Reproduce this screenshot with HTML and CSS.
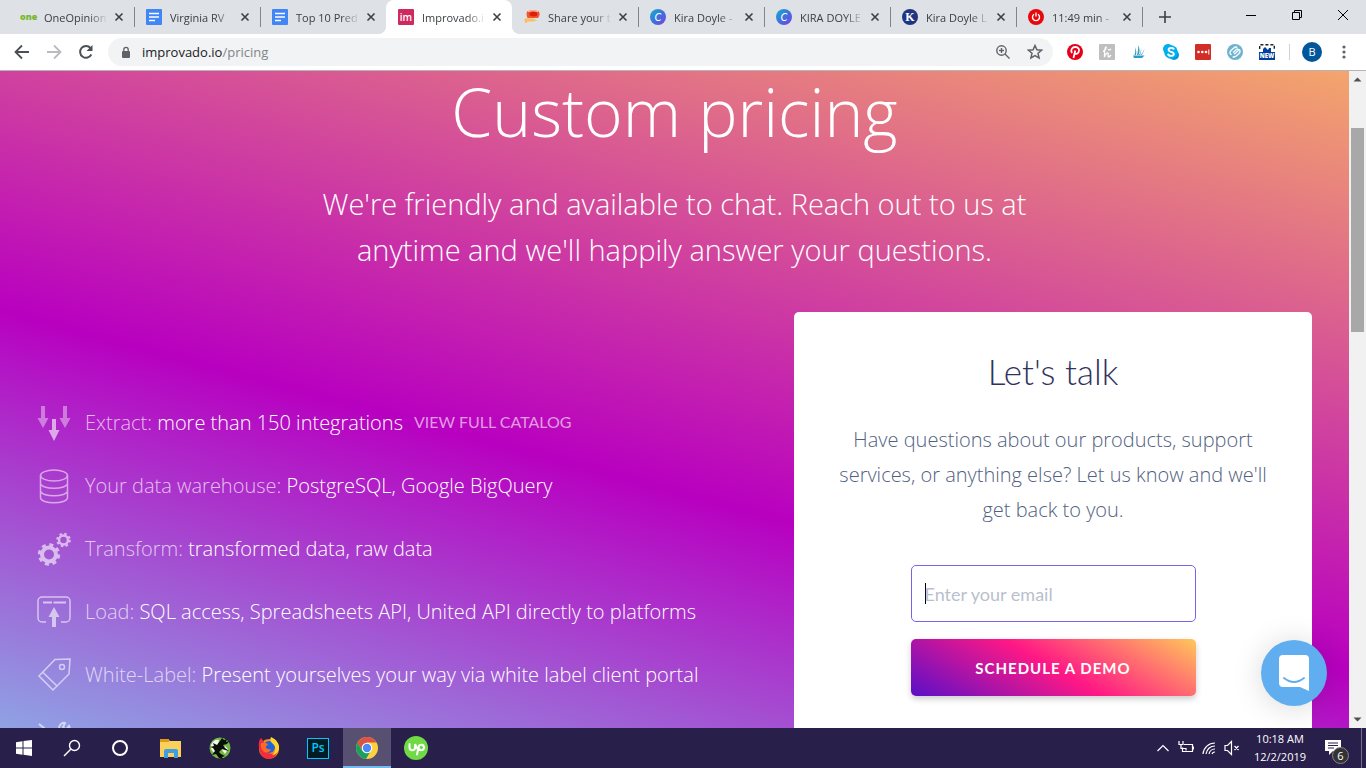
FILE: index.html
```
<!DOCTYPE html>
<html lang="en">
<head>
    <meta charset="UTF-8">
    <meta name="viewport" content="width=device-width, initial-scale=1.0">
    <title>Improvado.io - Pricing</title>
    <link rel="stylesheet" href="styles.css">
</head>
<body>
    <!-- tab strip -->
    <div class="tabs">
        <div class="tab">
            <span class="fav fav-one">one</span>
            <span class="tab-title">OneOpinion</span>
            <button class="close" aria-label="Close tab"><svg viewBox="0 0 12 12"><path d="M2.5 2.5l7 7M9.5 2.5l-7 7"/></svg></button>
        </div>
        <div class="tab">
            <svg class="fav" viewBox="0 0 16 16"><rect width="16" height="16" rx="1" fill="#4285f4"/><path d="M3 4.5h10M3 8h10M3 11.500h6" stroke="#fff" stroke-width="1.500"/></svg>
            <span class="tab-title">Virginia RV</span>
            <button class="close" aria-label="Close tab"><svg viewBox="0 0 12 12"><path d="M2.5 2.5l7 7M9.5 2.5l-7 7"/></svg></button>
        </div>
        <div class="tab no-line">
            <svg class="fav" viewBox="0 0 16 16"><rect width="16" height="16" rx="1" fill="#4285f4"/><path d="M3 4.5h10M3 8h10M3 11.500h6" stroke="#fff" stroke-width="1.500"/></svg>
            <span class="tab-title">Top 10 Pred</span>
            <button class="close" aria-label="Close tab"><svg viewBox="0 0 12 12"><path d="M2.5 2.5l7 7M9.5 2.5l-7 7"/></svg></button>
        </div>
        <div class="tab active no-line">
            <span class="fav fav-im">im</span>
            <span class="tab-title">Improvado.i</span>
            <button class="close" aria-label="Close tab"><svg viewBox="0 0 12 12"><path d="M2.5 2.5l7 7M9.5 2.5l-7 7"/></svg></button>
        </div>
        <div class="tab">
            <svg class="fav" viewBox="0 0 16 16"><path d="M1 9.500h8l4 2-4 1H3V14H1v-2l-1-1z" fill="#fdbd63"/><path d="M3 2.500Q9 0 15 2.500q1.500 4-1 6.500H3.500Q2 6 3 2.500z" fill="#f0582c"/><ellipse cx="9.500" cy="5" rx="4" ry="2.500" fill="#dc2010"/><path d="M4 2.500Q9 1 14 2.500" stroke="#ffc09a" fill="none"/></svg>
            <span class="tab-title">Share your t</span>
            <button class="close" aria-label="Close tab"><svg viewBox="0 0 12 12"><path d="M2.5 2.5l7 7M9.5 2.5l-7 7"/></svg></button>
        </div>
        <div class="tab">
            <span class="fav fav-canva">C</span>
            <span class="tab-title">Kira Doyle -</span>
            <button class="close" aria-label="Close tab"><svg viewBox="0 0 12 12"><path d="M2.5 2.5l7 7M9.5 2.5l-7 7"/></svg></button>
        </div>
        <div class="tab">
            <span class="fav fav-canva">C</span>
            <span class="tab-title">KIRA DOYLE</span>
            <button class="close" aria-label="Close tab"><svg viewBox="0 0 12 12"><path d="M2.5 2.5l7 7M9.5 2.5l-7 7"/></svg></button>
        </div>
        <div class="tab">
            <span class="fav fav-k">K</span>
            <span class="tab-title">Kira Doyle L</span>
            <button class="close" aria-label="Close tab"><svg viewBox="0 0 12 12"><path d="M2.5 2.5l7 7M9.5 2.5l-7 7"/></svg></button>
        </div>
        <div class="tab">
            <svg class="fav" viewBox="0 0 16 16"><circle cx="8" cy="8" r="8" fill="#e8080c"/><path d="M6 5.300a3.500 3.500 0 1 0 4 0M8 3.500v4" fill="none" stroke="#fff" stroke-width="1.400"/></svg>
            <span class="tab-title">11:49 min -</span>
            <button class="close" aria-label="Close tab"><svg viewBox="0 0 12 12"><path d="M2.5 2.5l7 7M9.5 2.5l-7 7"/></svg></button>
        </div>
        <button class="new-tab" aria-label="New tab"><svg viewBox="0 0 12 12"><path d="M6 0v12M0 6h12"/></svg></button>
        <div class="win-controls">
            <button aria-label="Minimize"><svg viewBox="0 0 10 10"><path d="M0 5.500h10"/></svg></button>
            <button aria-label="Restore"><svg viewBox="0 0 10 10"><path d="M.5 2.500h7v7h-7zM2.500 2.500v-2h7v7h-2"/></svg></button>
            <button aria-label="Close"><svg viewBox="0 0 10 10"><path d="M0 0l10 10M10 0L0 10"/></svg></button>
        </div>
    </div>

    <!-- toolbar -->
    <div class="toolbar">
        <button class="tool" aria-label="Back"><svg viewBox="0 0 16 16"><path d="M15 8H2M8 1.500L1.500 8 8 14.500" fill="none" stroke="#4c5054" stroke-width="1.800"/></svg></button>
        <button class="tool" aria-label="Forward"><svg viewBox="0 0 16 16"><path d="M1 8h13M8 1.500L14.500 8 8 14.500" fill="none" stroke="#b9bbbe" stroke-width="1.800"/></svg></button>
        <button class="tool" aria-label="Reload"><svg viewBox="0 0 16 16"><path d="M13.300 10.500A5.900 5.900 0 1 1 12.500 4" fill="none" stroke="#4c5054" stroke-width="2"/><path d="M14.500 1v6h-6z" fill="#4c5054"/></svg></button>
        <div class="omnibox">
            <svg class="lock" viewBox="0 0 10 13"><rect x="1" y="5" width="8" height="7" rx="1" fill="#5f6368"/><path d="M2.800 5V3.500a2.200 2.200 0 0 1 4.400 0V5" fill="none" stroke="#5f6368" stroke-width="1.300"/></svg>
            <a class="url" href="#">improvado.io<span>/pricing</span></a>
            <button class="tool" aria-label="Zoom"><svg viewBox="0 0 16 16" fill="none" stroke="#5f6368" stroke-width="1.400"><circle cx="6.500" cy="6.500" r="4.700"/><path d="M10 10l4.500 4.500M4 6.500h5M6.500 4v5"/></svg></button>
            <button class="tool" aria-label="Bookmark"><svg viewBox="0 0 16 16"><path d="M8 1.500l1.900 4.300 4.700.4-3.600 3.100 1.100 4.600L8 11.500l-4.100 2.400L5 9.300 1.400 6.200l4.700-.4z" fill="none" stroke="#5f6368" stroke-width="1.500"/></svg></button>
        </div>
        <div class="extensions">
            <button class="tool" aria-label="Pinterest"><svg viewBox="0 0 16 16"><circle cx="8" cy="8" r="8" fill="#e60019"/><path d="M5 9C3 5.500 5.500 3 8.300 3c3.200 0 4.700 2.700 3.300 5.200-1 1.900-3.200 2.100-4.100.8M8.300 6.500L6.500 14" fill="none" stroke="#fff" stroke-width="1.800"/></svg></button>
            <button class="tool" aria-label="Honey"><svg viewBox="0 0 16 16"><rect width="16" height="16" rx="1" fill="#bfbfbf"/><path d="M4 7.500c2-.5 4-4.500 2.800-4.500S5.500 8 5.500 13c.8-3.500 3.500-5 3.700-3.300.2 1.500-.6 3 .3 3.300.9 0 1.700-1 2.500-2M9 5.500q1.500 1 3-.5" fill="none" stroke="#fff" stroke-width="1.300"/></svg></button>
            <button class="tool" aria-label="Sail"><svg viewBox="0 0 16 16"><path d="M4 3c1.500 3 1.500 5.500 1 8H3.500C4.500 8 4.500 6 4 3zM7 1c2 4 2 7 .5 10H6C7 8 7.500 4 7 1zM10 4c.5 3 0 5-1 7H8c1.500-2 2-4 2-7zM13.500 4.500c-.5 3-1.500 5-3 6.500H9.500c2-1.500 3-3.500 4-6.500zM2 11.500h11.500L11 14H3z" fill="#2f9cc6"/></svg></button>
            <button class="tool" aria-label="Skype"><svg viewBox="0 0 16 16"><circle cx="5" cy="5" r="5" fill="#00aff0"/><circle cx="11" cy="11" r="5" fill="#0098dc"/><circle cx="8" cy="8" r="6.800" fill="#00aff0"/><path d="M11 5.500C10.500 3.500 5.500 3.500 5.500 6c0 2.200 5.400 1.400 5.400 4 0 2.500-5.400 2.600-6-.3" fill="none" stroke="#fff" stroke-width="1.900"/></svg></button>
            <button class="tool" aria-label="Password manager"><svg viewBox="0 0 16 16"><rect width="16" height="16" rx="1" fill="#d32d27"/><g fill="#fff"><circle cx="3.500" cy="8" r="1.300"/><circle cx="7.300" cy="8" r="1.300"/><circle cx="11" cy="8" r="1.300"/><path d="M13.300 5.500h1v5h-1z"/></g></svg></button>
            <button class="tool" aria-label="Ebates"><svg viewBox="0 0 16 16"><circle cx="8" cy="8" r="8" fill="#6db3cf"/><path d="M6 8.500l3.500-3c1.500-1 2.500.5 1.300 1.500L7 10.200M10.300 3.500C8.500 2.500 7.500 3.300 6.500 4.300L4 6.500C2.300 8.300 3 10 4.500 11M5.700 12.500c1.800 1 2.800.2 3.800-.8L12 9.500c1.700-1.800 1-3.500 0-4.200" fill="none" stroke="#f2fafd" stroke-width="1.500"/></svg></button>
            <button class="tool" aria-label="Screenshot"><svg viewBox="0 0 16 16"><path d="M.7 5V.700H15.300V5" fill="none" stroke="#222" stroke-width="1.400" stroke-dasharray="3 2"/><path d="M0 8h4V5l2-2 3 3 1-2h2v4h4v8H0z" fill="#003f9c"/><text x="8" y="14" class="new-label">NEW</text></svg></button>
        </div>
        <i class="tool-line"></i>
        <button class="tool" aria-label="Profile"><span class="avatar">B</span></button>
        <button class="tool" aria-label="Menu"><svg viewBox="0 0 16 16" fill="#5f6368"><circle cx="8" cy="3" r="1.600"/><circle cx="8" cy="8" r="1.600"/><circle cx="8" cy="13" r="1.600"/></svg></button>
    </div>

    <!-- web page area -->
    <div class="viewport">
        <div class="hero">
            <h1>Custom pricing</h1>
            <p class="lead">We're friendly and available to chat. Reach out to us at anytime and we'll happily answer your questions.</p>
            <div class="wrap">
                <ul class="features">
                    <li>
                        <svg viewBox="0 0 34 36" fill="#fff"><g opacity=".4"><path d="M4 1h4v12h3.500L6 23 .5 13H4zM26 1h4v12h3.500L28 23l-5.500-10H26z"/></g><path opacity=".6" d="M15 14h4v11h3.500L17 36l-5.500-11H15z"/></svg>
                        <p>Extract: <strong>more than 150 integrations</strong><a href="#">VIEW FULL CATALOG</a></p>
                    </li>
                    <li>
                        <svg viewBox="0 0 34 36" fill="none" stroke="#fff" stroke-width="1.500" opacity=".55"><ellipse cx="17" cy="7.500" rx="13.500" ry="5.500"/><path d="M3.500 7.500v22c0 7 27 7 27 0v-22M3.500 15c0 7 27 7 27 0M3.500 22.500c0 7 27 7 27 0"/></svg>
                        <p>Your data warehouse: <strong>PostgreSQL, Google BigQuery</strong></p>
                    </li>
                    <li>
                        <svg viewBox="0 0 34 36" fill="none" stroke="#fff"><g opacity=".6"><circle cx="12" cy="23.500" r="7" stroke-width="4"/><circle cx="12" cy="23.500" r="9.700" stroke-width="3" stroke-dasharray="4 3.620"/><circle cx="26.500" cy="9" r="4.500" stroke-width="2.500"/><circle cx="26.500" cy="9" r="6.300" stroke-width="2" stroke-dasharray="2.500 2.450"/></g></svg>
                        <p>Transform: <strong>transformed data, raw data</strong></p>
                    </li>
                    <li>
                        <svg viewBox="0 0 34 36" fill="none" stroke="#fff" opacity=".6"><path d="M9 28H5a4 4 0 0 1-4-4V7a4 4 0 0 1 4-4h24a4 4 0 0 1 4 4v17a4 4 0 0 1-4 4h-5" stroke-width="1.500"/><path d="M6 8.500h9M16.500 8.500H29" stroke-width="2"/><path d="M15 33V23h-3.500L17 13l5.500 10H19v10z" fill="#fff" stroke="none"/></svg>
                        <p>Load: <strong>SQL access, Spreadsheets API, United API directly to platforms</strong></p>
                    </li>
                    <li>
                        <svg viewBox="0 0 34 36" fill="none" stroke="#fff" stroke-width="1.500" opacity=".6"><path d="M2 19L18 2.500l15-.5-1 15L16 33zM6 15.500L20 29"/><circle cx="25" cy="10" r="2.500"/></svg>
                        <p>White-Label: <strong>Present yourselves your way via white label client portal</strong></p>
                    </li>
                    <li>
                        <svg viewBox="0 0 34 36" fill="none" stroke="#fff" stroke-width="2" opacity=".6"><path d="M2 4l5 4 17 21M22 9c0-4 3-7 6-6l-2 4 3 3 3-4c2 4-1 7-5 7L9 32"/></svg>
                    </li>
                </ul>
                <div class="card">
                    <h2>Let's talk</h2>
                    <p>Have questions about our products, support services, or anything else? Let us know and we'll get back to you.</p>
                    <form>
                        <input type="email" class="email" placeholder="Enter your email" aria-label="Enter your email">
                        <button type="button" class="demo">SCHEDULE A DEMO</button>
                    </form>
                </div>
            </div>
        </div>
        <div class="scrollbar">
            <svg viewBox="0 0 17 17"><path d="M4.500 10.500h8l-4-4z" fill="#505050"/></svg>
            <div class="thumb"></div>
            <svg viewBox="0 0 17 17"><path d="M4.500 6.500h8l-4 4z" fill="#505050"/></svg>
        </div>
        <button class="chat" aria-label="Open chat"><svg viewBox="0 0 30 36"><path d="M4 0h22a4 4 0 0 1 4 4v32l-9-4H4a4 4 0 0 1-4-4V4a4 4 0 0 1 4-4z" fill="#fff"/><path d="M5 23q10 8 20 0" fill="none" stroke="#60aef0" stroke-width="2" stroke-linecap="round"/></svg></button>
    </div>

    <!-- taskbar -->
    <div class="taskbar">
        <div class="start">
            <button aria-label="Start"><svg viewBox="0 0 24 24" fill="#fff"><path d="M4 6.300l6.500-1v6.200H4zM11.500 5.100L20 4v7.500h-8.500zM4 12.500h6.500v6.200l-6.500-1zM11.500 12.500H20V20l-8.500-1.200z"/></svg></button>
            <button aria-label="Search"><svg viewBox="0 0 24 24" fill="none" stroke="#fff" stroke-width="1.400"><circle cx="14.500" cy="9.500" r="5"/><path d="M11 13l-7 7"/></svg></button>
            <button aria-label="Cortana"><svg viewBox="0 0 24 24" fill="none" stroke="#fff" stroke-width="2"><circle cx="12" cy="12" r="7"/></svg></button>
        </div>
        <div class="apps">
            <button aria-label="File Explorer"><svg viewBox="0 0 24 24"><path d="M1 4h9l1 1h11v16H1z" fill="#fbd15b"/><path d="M1 3h9v3H1z" fill="#dc9a17"/><path d="M5 21v-6q0-2 2-2h10q2 0 2 2v7h-4v-5H9v5H5z" fill="#3f9ee0"/></svg></button>
            <button aria-label="Games"><svg viewBox="0 0 24 24"><circle cx="12" cy="12" r="10.500" fill="#74b944"/><path d="M3 9Q6 3 11 4l-1 5 1 3-4 2 1 4Q2 15 3 9zM17 10l3 3-3 5-3-4z" fill="#f3f8ee"/><path d="M5 7l4 2 3-4 2-3 2 2 3-1-1 3 3-1-2 3-4 1 2 3 4 3-4-1-3-1-3 3 2 2 4 2-3 1 1 2-4-1-3-4-4 1 3-4-2-3-3-1 4-1z" fill="#0b0e08"/></svg></button>
            <button aria-label="Firefox"><svg viewBox="0 0 24 24"><circle cx="12" cy="13" r="10" fill="#ff8a16"/><path d="M2 12Q1 5 4 2l3 4q-3 6 2 10 7 4 12-1-3 8-10 8-8-1-9-11z" fill="#f52a3d"/><circle cx="12" cy="11" r="6" fill="#1d65d8"/><path d="M14 1c5 2 9 7 8 12-1 4-4 6-7 6 5-4 4-9 0-12-2-2-2-4-1-6z" fill="#ffd530"/><path d="M4 7q6-1 7 2-3 1-2 3 2 2 5 1-2 5-7 3-4-4-3-9z" fill="#ff6a22"/></svg></button>
            <button aria-label="Photoshop"><span class="ps">Ps</span></button>
            <button class="current" aria-label="Chrome"><svg viewBox="0 0 24 24"><circle cx="12" cy="12" r="11" fill="#fdd23e"/><path d="M2.500 6.500A11 11 0 0 1 21.500 6.500H12L7.200 14.800z" fill="#de5245"/><path d="M2.500 6.500A11 11 0 0 0 11 23l5-8.500-8.800.3z" fill="#1ba15f"/><circle cx="12" cy="12" r="5.300" fill="#fff"/><circle cx="12" cy="12" r="4.200" fill="#4a8af4"/></svg></button>
            <button aria-label="Upwork"><span class="up"><svg viewBox="0 0 24 24" fill="none" stroke="#fff" stroke-width="2" stroke-linecap="round"><path d="M5.500 8v3.500a2.800 2.800 0 0 0 5.600 0V8c1 3 2 5 4 6M13 18.500l1.500-7c.5-4 5.500-3.500 5.500 0a2.700 2.700 0 0 1-5.200 1"/></svg></span></button>
        </div>
        <div class="tray">
            <svg viewBox="0 0 16 16" class="tray-icon"><path d="M2.500 11L8 5.500l5.500 5.500"/></svg>
            <svg viewBox="0 0 16 16" class="tray-icon"><path d="M6 4.500h8.500v7H4.500v-4M15.500 6.500v3M1 1v3.500h4V1M3 4.500v4h5v2"/></svg>
            <svg viewBox="0 0 16 16" class="tray-icon"><path d="M2 14A12 12 0 0 1 14 3M5 14a9 9 0 0 1 9-8M8 14a6 6 0 0 1 6-5M11 14a3 3 0 0 1 3-2"/></svg>
            <svg viewBox="0 0 16 16" class="tray-icon"><path d="M1 5.500h2.500l4-4v13l-4-4H1zM10.500 6l4 4M14.500 6l-4 4"/></svg>
            <div class="clock">10:18 AM<br>12/2/2019</div>
            <button class="notes" aria-label="Notifications"><svg viewBox="0 0 18 18"><path d="M1 1h16v11H9l-4 4v-4H1z" fill="#fff"/><path d="M4 4h10M4 6.500h10M4 9h6" stroke="#28204a"/></svg><span>6</span></button>
        </div>
    </div>
</body>
</html>
```
FILE: styles.css
```
*{
    margin: 0;
    padding: 0;
    box-sizing: border-box;
    list-style: none;
}
body{
    height: 100vh;
    display: flex;
    flex-direction: column;
    overflow: hidden;
    font-family: "Open Sans", "Noto Sans", sans-serif;
}
button{
    border: none;
    background: none;
    font-family: inherit;
    display: flex;
    align-items: center;
    justify-content: center;
}
a{
    text-decoration: none;
}

/* tab strip */
.tabs{
    height: 34px;
    flex: none;
    display: flex;
    padding-left: 8px;
    background-color: #dee1e6;
}
.tab{
    flex: 0 1 126px;
    min-width: 0;
    display: flex;
    align-items: center;
    padding: 0 9px 0 12px;
    position: relative;
}
.tab::after{
    content: "";
    position: absolute;
    right: -1px;
    top: 7px;
    width: 1px;
    height: 20px;
    background-color: #80868b;
}
.tab.no-line::after{
    display: none;
}
.tab.active{
    background-color: #fff;
    border-radius: 8px 8px 0 0;
}
/* curved feet of the active tab */
.tab.active::before,
.tab.active.no-line::after{
    content: "";
    display: block;
    position: absolute;
    top: auto;
    bottom: 0;
    width: 8px;
    height: 8px;
}
.tab.active::before{
    left: -8px;
    background: radial-gradient(circle at 0 0, transparent 8px, #fff 8px);
}
.tab.active.no-line::after{
    right: -8px;
    background: radial-gradient(circle at 100% 0, transparent 8px, #fff 8px);
}
.fav{
    width: 16px;
    height: 16px;
    flex: none;
    line-height: 16px;
    text-align: center;
}
.fav-one{
    color: #76b82a;
    font-size: 9px;
    font-weight: 800;
}
.fav-im{
    background-color: #cf2a5f;
    border-radius: 1px;
    color: #fff;
    font-size: 10px;
    font-weight: 600;
}
.fav-canva{
    border-radius: 50%;
    background: linear-gradient(135deg, #10b5cc, #3d72dc 50%, #7b3fe4);
    color: #fff;
    font-family: Lato, sans-serif;
    font-size: 11px;
    font-style: italic;
}
.fav-k{
    border-radius: 50%;
    background-color: #1f3583;
    color: #fff;
    font-family: "Liberation Serif", serif;
    font-size: 12px;
    font-weight: bold;
}
.tab-title{
    flex: 1;
    min-width: 0;
    margin: 0 5px 0 8px;
    white-space: nowrap;
    font-size: 11px;
    color: #3c4043;
    -webkit-mask-image: linear-gradient(to right, #000 70%, transparent);
    mask-image: linear-gradient(to right, #000 70%, transparent);
}
.close,
.close svg{
    width: 12px;
    height: 12px;
    flex: none;
}
.close path,
.new-tab path{
    stroke: #3c4043;
    stroke-width: 1.600;
}
.new-tab{
    width: 46px;
}
.new-tab svg{
    width: 12px;
    height: 12px;
}
.win-controls{
    display: flex;
    margin-left: auto;
    height: 29px;
}
.win-controls button{
    width: 46px;
}
.win-controls svg{
    width: 10px;
    height: 10px;
    fill: none;
    stroke: #000;
}

/* toolbar */
.toolbar{
    height: 37px;
    flex: none;
    display: flex;
    align-items: center;
    padding: 0 6px;
    background-color: #fff;
    border-bottom: 1px solid #b6b4b6;
}
.tool{
    width: 32px;
    height: 28px;
    flex: none;
}
.tool svg{
    width: 16px;
    height: 16px;
}
.omnibox{
    flex: 1;
    height: 28px;
    margin: 0 6px;
    padding: 0 2px 0 13px;
    display: flex;
    align-items: center;
    border-radius: 14px;
    background-color: #f1f3f4;
}
.lock{
    width: 10px;
    height: 13px;
}
.url{
    flex: 1;
    margin-left: 11px;
    font-size: 13px;
    color: #202124;
}
.url span{
    color: #80868b;
}
.extensions{
    display: flex;
}
.new-label{
    fill: #fff;
    font-size: 6px;
    font-weight: 800;
    text-anchor: middle;
}
.tool-line{
    width: 1px;
    height: 16px;
    margin: 0 6px;
    background-color: #d0d2d5;
}
.avatar{
    width: 20px;
    height: 20px;
    border-radius: 50%;
    background-color: #01579b;
    color: #fff;
    font-size: 11px;
    line-height: 20px;
}

/* page */
.viewport{
    flex: 1;
    min-height: 0;
    display: flex;
    position: relative;
}
.hero{
    flex: 1;
    overflow: hidden;
    color: #fff;
    background: linear-gradient(15deg, #8fa2e4, #b800c0 41%, #f4a56c);
}
.hero h1{
    margin-top: -8px;
    font-size: 66px;
    line-height: 96px;
    font-weight: 300;
    text-align: center;
}
.lead{
    max-width: 760px;
    margin: 22px auto 39px;
    font-size: 29px;
    line-height: 46px;
    font-weight: 300;
    text-align: center;
}
.wrap{
    display: grid;
    grid-template-columns: 1fr 518px;
    align-items: start;
    padding: 0 37px;
}
.features{
    margin-top: 79px;
}
.features li{
    display: flex;
    align-items: center;
    height: 63px;
    font-size: 20px;
    font-weight: 300;
    color: rgba(255, 255, 255, .7);
}
.features svg{
    width: 34px;
    height: 36px;
    margin-right: 14px;
}
.features strong{
    font-weight: 300;
    color: #fff;
}
.features a{
    margin-left: 11px;
    vertical-align: 2px;
    line-height: 16px;
    font-family: Lato, sans-serif;
    font-size: 16px;
    font-weight: 400;
    color: rgba(255, 255, 255, .6);
}
.card{
    height: 480px;
    padding: 35px 40px;
    border-radius: 5px;
    background-color: #fff;
    text-align: center;
    color: #525f7f;
}
.card h2{
    font-family: Lato, sans-serif;
    font-size: 35px;
    line-height: 48px;
    font-weight: 300;
    color: #32325d;
}
.card p{
    margin: 27px 0 38px;
    font-size: 20px;
    line-height: 35px;
    font-weight: 300;
}
.card form{
    width: 285px;
    margin: auto;
}
.email{
    display: block;
    width: 100%;
    height: 57px;
    padding: 0 13px;
    border: 1px solid #7a63e8;
    border-radius: 5px;
    /* text caret at the start of the field */
    background: linear-gradient(#000, #000) 13px 50% / 1px 21px no-repeat #fff;
    font-family: Lato, sans-serif;
    font-size: 18px;
}
.email::placeholder{
    color: #b9bfcd;
}
.demo{
    width: 100%;
    height: 57px;
    margin-top: 17px;
    border-radius: 5px;
    background: linear-gradient(30deg, #5a0fc8, #ff1885 50%, #ffc75a);
    box-shadow: 0 3px 6px rgba(0, 0, 0, .2);
    color: #fff;
    font-family: Lato, sans-serif;
    font-size: 15px;
    font-weight: 700;
    letter-spacing: 1px;
}
.chat{
    position: absolute;
    right: 39px;
    bottom: 22px;
    width: 66px;
    height: 66px;
    border-radius: 50%;
    background-color: #60aef0;
    box-shadow: 0 2px 30px rgba(0, 0, 0, .15);
}
.chat svg{
    width: 30px;
    height: 36px;
}
.scrollbar{
    width: 17px;
    flex: none;
    display: flex;
    flex-direction: column;
    background-color: #f1f1f1;
}
.scrollbar svg{
    width: 17px;
    height: 17px;
}
.thumb{
    height: 204px;
    margin: 40px 2px auto;
    background-color: #a8a8a8;
}

/* taskbar */
.taskbar{
    height: 40px;
    flex: none;
    display: flex;
    background-color: #28204a;
    color: #fff;
}
.start,
.apps{
    display: flex;
}
.apps{
    margin-left: 3px;
    gap: 1px;
}
.start button,
.apps button{
    width: 48px;
    height: 40px;
}
.start svg,
.apps svg{
    width: 24px;
    height: 24px;
}
.apps .current{
    background-color: #575070;
    box-shadow: inset 0 -2px #76b9ed;
}
.ps{
    width: 22px;
    height: 21px;
    border: 1px solid #00c8ff;
    background-color: #001d26;
    color: #00c8ff;
    font-size: 12px;
    line-height: 18px;
    font-weight: 600;
}
.up{
    width: 24px;
    height: 24px;
    border-radius: 50%;
    background-color: #6fda44;
}
.tray{
    display: flex;
    align-items: center;
    gap: 7px;
    margin-left: auto;
    padding-right: 4px;
}
.tray-icon{
    width: 16px;
    height: 16px;
    fill: none;
    stroke: #fff;
    stroke-width: 1.200;
}
.clock{
    width: 66px;
    font-size: 11px;
    line-height: 18px;
    text-align: center;
}
.notes{
    width: 42px;
    height: 40px;
    padding-right: 16px;
    position: relative;
    border-right: 1px solid #77718a;
}
.notes svg{
    width: 18px;
    height: 18px;
    flex: none;
}
.notes span{
    position: absolute;
    right: 12px;
    bottom: 4px;
    width: 17px;
    height: 17px;
    border: 1px solid #888;
    border-radius: 50%;
    background-color: #333;
    color: #fff;
    font-size: 11px;
    line-height: 15px;
}
```
